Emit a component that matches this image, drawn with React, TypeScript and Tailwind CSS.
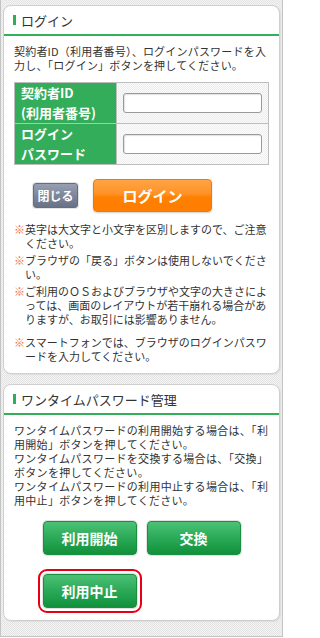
import React from 'react';

const font = { fontFamily: '"Noto Sans CJK JP", "Noto Sans", sans-serif' };

const Header: React.FC<{ title: string }> = ({ title }) => (
  <div className="flex h-[30px] items-center border-b-2 border-[#34b05a] pl-[9px]">
    <span className="mr-[5px] h-[10px] w-[3px] bg-[#2fae58]"></span>
    <span className="text-[13px] leading-none text-[#333]">{title}</span>
  </div>
);

const Note: React.FC<{ lines: string[]; className?: string }> = ({ lines, className }) => (
  <div className={`flex ${className ?? ''}`}>
    <span className="w-[11px] shrink-0 text-[#f26b3a]">※</span>
    <div>
      {lines.map((l, i) => (
        <div key={i} className="whitespace-nowrap">{l}</div>
      ))}
    </div>
  </div>
);

const GreenButton: React.FC<{ label: string; highlight?: boolean }> = ({ label, highlight }) => (
  <button
    className={`h-[34px] w-[94px] rounded-[4px] border border-[#1a8f42] bg-[linear-gradient(#4cc176,#2aa957_50%,#12913c)] text-[14px] font-bold text-white shadow-[0_0_0_1px_#e2e2e2] ${
      highlight ? 'outline-2 outline-offset-[3px] outline-[#e60012]' : ''
    }`}
  >
    {label}
  </button>
);

export default function App() {
  return (
    <div
      style={font}
      className="h-[637px] w-[283px] border-x border-b border-[#c4c4c4] bg-[repeating-conic-gradient(#e3e3e3_0_25%,#f4f4f4_0_50%)] bg-[length:2px_2px] px-[2px] pt-[5px] text-[#333]"
    >
      {/* ログイン */}
      <div className="rounded-[8px] border border-[#cfcfcf] bg-white shadow-[1px_1px_1px_rgba(0,0,0,0.06)]">
        <Header title="ログイン" />
        <div className="px-[10px] pt-[8px] pb-[10px] text-[11px] leading-[14px]">
          <p className="whitespace-nowrap tracking-[0.2px]">
            契約者ID（利用者番号）、ログインパスワードを入
            <br />
            力し、「ログイン」ボタンを押してください。
          </p>

          <div className="mt-[10px] grid grid-cols-[101px_1fr] border border-[#bdbdbd]">
            <div className="flex h-[40px] flex-col justify-center bg-[#33ad59] pl-[6px] text-[13px] font-bold leading-[20px] text-white">
              <span>契約者ID</span>
              <span>(利用者番号)</span>
            </div>
            <div className="flex h-[40px] items-center border-l border-[#bdbdbd] bg-[repeating-conic-gradient(#ececec_0_25%,#fbfbfb_0_50%)] bg-[length:2px_2px] pl-[6px]">
              <input className="h-[20px] w-[139px] rounded-[3px] border border-[#9a9a9a] bg-white shadow-[inset_1px_1px_1px_rgba(0,0,0,0.12)]" />
            </div>
            <div className="flex h-[41px] flex-col justify-center border-t border-[#bdbdbd] bg-[#33ad59] pl-[6px] text-[13px] font-bold leading-[20px] text-white">
              <span>ログイン</span>
              <span>パスワード</span>
            </div>
            <div className="flex h-[41px] items-center border-t border-l border-[#bdbdbd] bg-[repeating-conic-gradient(#f0f0f0_0_25%,#fcfcfc_0_50%)] bg-[length:2px_2px] pl-[6px]">
              <input type="password" className="h-[20px] w-[139px] rounded-[3px] border border-[#9a9a9a] bg-white shadow-[inset_1px_1px_1px_rgba(0,0,0,0.12)]" />
            </div>
          </div>

          <div className="mt-[14px] flex items-center gap-[15px] pl-[19px]">
            <button className="h-[25px] w-[45px] rounded-[3px] border border-[#656d80] bg-[linear-gradient(#97a0b3,#7d869a_50%,#687186)] text-[12px] font-bold text-white shadow-[0_0_0_1px_#e4e4e4]">
              閉じる
            </button>
            <button className="h-[33px] w-[119px] rounded-[4px] border border-[#ef7a00] bg-[linear-gradient(#ffa444,#ff9226_45%,#ff8000_55%,#ff7d00)] text-[15px] font-bold text-white shadow-[0_1px_2px_rgba(0,0,0,0.2)]">
              ログイン
            </button>
          </div>

          <div className="mt-[10px]">
            <Note lines={['英字は大文字と小文字を区別しますので、ご注意', 'ください。']} />
            <Note className="mt-[3px]" lines={['ブラウザの「戻る」ボタンは使用しないでくださ', 'い。']} />
            <Note
              className="mt-[3px]"
              lines={['ご利用のＯＳおよびブラウザや文字の大きさによ', 'っては、画面のレイアウトが若干崩れる場合があ', 'りますが、お取引には影響ありません。']}
            />
            <Note className="mt-[9px]" lines={['スマートフォンでは、ブラウザのログインパスワ', 'ードを入力してください。']} />
          </div>
        </div>
      </div>

      {/* ワンタイムパスワード管理 */}
      <div className="mt-[10px] rounded-[8px] border border-[#cfcfcf] bg-white shadow-[1px_1px_1px_rgba(0,0,0,0.06)]">
        <Header title="ワンタイムパスワード管理" />
        <div className="px-[10px] pt-[8px] pb-[12px] text-[11px] leading-[14px]">
          <div className="whitespace-nowrap tracking-[0.3px]">
            <div>ワンタイムパスワードの利用開始する場合は、「利</div>
            <div>用開始」ボタンを押してください。</div>
            <div>ワンタイムパスワードを交換する場合は、「交換」</div>
            <div>ボタンを押してください。</div>
            <div>ワンタイムパスワードの利用中止する場合は、「利</div>
            <div>用中止」ボタンを押してください。</div>
          </div>

          <div className="mt-[14px] grid grid-cols-[94px_94px] justify-center gap-x-[10px] gap-y-[19px]">
            <GreenButton label="利用開始" />
            <GreenButton label="交換" />
            <GreenButton label="利用中止" highlight />
          </div>
        </div>
      </div>
    </div>
  );
}
